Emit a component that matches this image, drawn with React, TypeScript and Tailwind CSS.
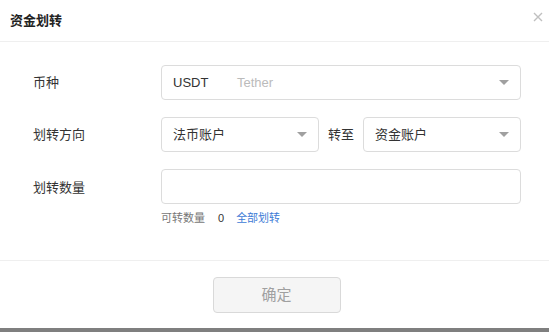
const font = "font-['Arial','Noto_Sans_CJK_SC',sans-serif]";

function Caret() {
  return (
    <svg width="10" height="6" viewBox="0 0 10 6" className="shrink-0">
      <path d="M0 0 L10 0 L5 5 Z" fill="#a0a0a0" />
    </svg>
  );
}

function Select({ children, className = "" }: { children: React.ReactNode; className?: string }) {
  return (
    <div
      className={`flex h-[35px] items-center justify-between rounded-[4px] border border-[#dcdcdc] bg-white pl-[11px] pr-[11px] text-[13px] text-[#333] ${className}`}
    >
      <div className="flex items-center">{children}</div>
      <Caret />
    </div>
  );
}

export default function App() {
  return (
    <div className={`flex h-[332px] w-[549px] flex-col bg-white ${font}`}>
      {/* Header */}
      <div className="flex h-[42px] items-center justify-between border-b border-[#efefef] pl-[10px] pr-[6px]">
        <h1 className="text-[13px] font-bold text-[#222]">资金划转</h1>
        <svg width="10" height="10" viewBox="0 0 10 10" className="mr-[0px] mt-[-8px]">
          <path d="M1 1 L9 9 M9 1 L1 9" stroke="#c0c0c0" strokeWidth="1.4" />
        </svg>
      </div>

      {/* Body */}
      <div className="flex flex-1 flex-col gap-[17px] pl-[33px] pr-[28px] pt-[23px]">
        <div className="flex items-center">
          <div className="w-[128px] text-[13px] text-[#333]">币种</div>
          <Select className="flex-1">
            <span className="w-[64px]">USDT</span>
            <span className="text-[#bbb]">Tether</span>
          </Select>
        </div>

        <div className="flex items-center">
          <div className="w-[128px] text-[13px] text-[#333]">划转方向</div>
          <Select className="w-[158px]">法币账户</Select>
          <span className="w-[44px] text-center text-[13px] text-[#333]">转至</span>
          <Select className="flex-1">资金账户</Select>
        </div>

        <div className="flex">
          <div className="w-[128px] pt-[9px] text-[13px] text-[#333]">划转数量</div>
          <div className="flex flex-1 flex-col">
            <div className="h-[35px] rounded-[4px] border border-[#dcdcdc] bg-white" />
            <div className="mt-[6px] flex items-center text-[11px] text-[#777]">
              <span>可转数量</span>
              <span className="ml-[13px] text-[#333]">0</span>
              <span className="ml-[12px] text-[#3d7bd6]">全部划转</span>
            </div>
          </div>
        </div>
      </div>

      {/* Footer */}
      <div className="flex h-[68px] items-start justify-center border-t border-[#efefef] pl-[4px] pt-[16px]">
        <button className="h-[36px] w-[128px] rounded-[4px] border border-[#d9d9d9] bg-[#f5f5f5] text-[15px] text-[#a0a0a0]">
          确定
        </button>
      </div>
      <div className="h-[4px] bg-[#7f7f7f]" />
    </div>
  );
}
